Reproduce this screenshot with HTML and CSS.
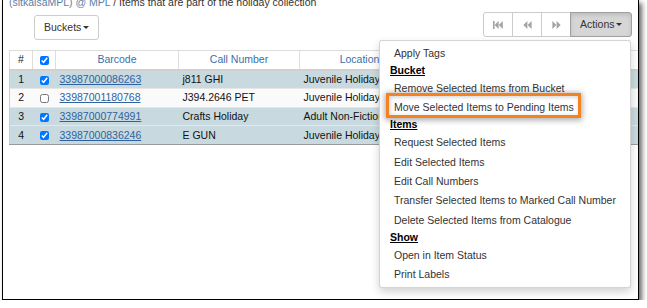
FILE: index.html
```html
<!DOCTYPE html>
<html>
<head>
<meta charset="utf-8">
<link rel="stylesheet" href="styles.css">
</head>
<body>
<div class="frame">
  <div class="title"><span class="title-user">(sitkaisaMPL) @ MPL</span> / Items that are part of the holiday collection</div>
  <div class="toolbar">
    <button class="btn">Buckets<span class="caret"></span></button>
    <div class="btn-group">
      <button class="btn btn-icon" disabled>
        <svg width="10" height="8" viewBox="0 0 10 8"><rect x="0" y="0" width="1.6" height="8"/><polygon points="5.6,0 1.6,4 5.6,8"/><polygon points="9.8,0 5.8,4 9.8,8"/></svg>
      </button>
      <button class="btn btn-icon" disabled>
        <svg width="9" height="8" viewBox="0 0 9 8"><polygon points="4.4,0 0.4,4 4.4,8"/><polygon points="8.6,0 4.6,4 8.6,8"/></svg>
      </button>
      <button class="btn btn-icon" disabled>
        <svg width="9" height="8" viewBox="0 0 9 8"><polygon points="0.4,0 4.4,4 0.4,8"/><polygon points="4.6,0 8.6,4 4.6,8"/></svg>
      </button>
      <button class="btn btn-active">Actions <span class="caret"></span></button>
      <div class="menu">
        <div class="menu-item">Apply Tags</div>
        <div class="menu-header">Bucket</div>
        <div class="menu-item">Remove Selected Items from Bucket</div>
        <div class="menu-item menu-marked">Move Selected Items to Pending Items<span class="highlight"></span></div>
        <div class="menu-header">Items</div>
        <div class="menu-item">Request Selected Items</div>
        <div class="menu-item">Edit Selected Items</div>
        <div class="menu-item">Edit Call Numbers</div>
        <div class="menu-item">Transfer Selected Items to Marked Call Number</div>
        <div class="menu-item">Delete Selected Items from Catalogue</div>
        <div class="menu-header">Show</div>
        <div class="menu-item">Open in Item Status</div>
        <div class="menu-item">Print Labels</div>
      </div>
    </div>
  </div>
  <table class="grid">
    <colgroup>
      <col class="c-num"><col class="c-chk"><col class="c-bar"><col class="c-call"><col class="c-loc"><col class="c-lib"><col class="c-last">
    </colgroup>
    <thead>
      <tr>
        <th class="plain">#</th>
        <th><input type="checkbox" checked></th>
        <th>Barcode</th>
        <th>Call Number</th>
        <th>Location</th>
        <th>Circulation Library</th>
        <th>Owning Library</th>
      </tr>
    </thead>
    <tbody>
      <tr class="sel">
        <td class="center">1</td>
        <td class="center"><input type="checkbox" checked></td>
        <td><a href="#">33987000086263</a></td>
        <td>j811 GHI</td>
        <td>Juvenile Holiday</td>
        <td>MPL</td>
        <td class="last"><a href="#">tw</a></td>
      </tr>
      <tr>
        <td class="center">2</td>
        <td class="center"><input type="checkbox"></td>
        <td><a href="#">33987001180768</a></td>
        <td>J394.2646 PET</td>
        <td>Juvenile Holiday</td>
        <td>MPL</td>
        <td class="last"></td>
      </tr>
      <tr class="sel">
        <td class="center">3</td>
        <td class="center"><input type="checkbox" checked></td>
        <td><a href="#">33987000774991</a></td>
        <td>Crafts Holiday</td>
        <td>Adult Non-Fiction</td>
        <td>MPL</td>
        <td class="last"><a href="#">3</a></td>
      </tr>
      <tr class="sel">
        <td class="center">4</td>
        <td class="center"><input type="checkbox" checked></td>
        <td><a href="#">33987000836246</a></td>
        <td>E GUN</td>
        <td>Juvenile Holiday</td>
        <td>MPL</td>
        <td class="last"></td>
      </tr>
    </tbody>
  </table>
</div>
</body>
</html>
```
FILE: styles.css
```css
* { box-sizing: border-box; }
html, body { margin: 0; padding: 0; background: #fff; }
body {
  font-family: "Liberation Sans", Arial, sans-serif;
  font-size: 10.5px;
  line-height: 15px;
  color: #333;
}
.frame {
  position: relative;
  margin-left: 2px;
  width: 637px;
  height: 300px;
  border: 1px solid #000;
  border-top: none;
  box-shadow: 3px 3px 5px rgba(0,0,0,0.6);
  overflow: hidden;
  background: #fff;
}
.title {
  height: 15px;
  margin-top: -5px;
  padding-left: 6px;
  white-space: nowrap;
  color: #333;
}
.title-user { color: #5a7fa6; }
.toolbar {
  display: flex;
  justify-content: space-between;
  align-items: flex-start;
  padding: 0 6px 0 31px;
}
.btn {
  font-family: inherit;
  font-size: 10.5px;
  line-height: 15px;
  height: 25px;
  padding: 4px 9px;
  border: 1px solid #ccc;
  border-radius: 3px;
  background: #fff;
  color: #333;
  margin: 0;
  display: inline-flex;
  align-items: center;
}
.toolbar > .btn { margin-top: 5px; }
.caret {
  display: inline-block;
  width: 0;
  height: 0;
  margin-left: 1.5px;
  border-top: 3px solid #333;
  border-left: 3px solid transparent;
  border-right: 3px solid transparent;
  vertical-align: middle;
}
.btn-group {
  position: relative;
  display: flex;
  margin-top: 2px;
}
.btn-group .btn { border-radius: 0; margin-left: -1px; }
.btn-group .btn:first-child { border-radius: 3px 0 0 3px; margin-left: 0; }
.btn-group .btn-active { border-radius: 0 3px 3px 0; }
.btn-icon {
  width: 30px;
  justify-content: center;
  padding: 0;
}
.btn-icon svg { fill: #a3a3a3; display: block; }
.btn-active {
  background: #d6d6d6;
  border-color: #a0a0a0;
  box-shadow: inset 0 2px 4px rgba(0,0,0,0.12);
  position: relative;
  z-index: 1;
}
.menu {
  position: absolute;
  top: 28px;
  right: 1px;
  width: 252px;
  padding: 2.5px 0;
  background: #fff;
  border: 1px solid rgba(0,0,0,0.17);
  border-radius: 3px;
  box-shadow: 0 4px 9px rgba(0,0,0,0.18);
  z-index: 10;
}
.menu-item {
  position: relative;
  padding: 2.5px 14px;
  line-height: 14.4px;
  white-space: nowrap;
  color: #333;
}
.menu-header {
  padding: 0 10px;
  line-height: 15.5px;
  font-weight: bold;
  text-decoration: underline;
  color: #000;
}
.highlight {
  position: absolute;
  left: 6px;
  top: -5px;
  width: 195px;
  height: 25px;
  border: 3px solid #f58220;
  box-shadow: 0 1px 6px 1px rgba(0,0,0,0.35), inset 1px 1px 4px rgba(0,0,0,0.2);
}
.grid {
  margin: 10px 0 0 6px;
  border-collapse: collapse;
  table-layout: fixed;
  width: 720px;
}
.c-num { width: 23px; }
.c-chk { width: 23px; }
.c-bar { width: 123px; }
.c-call { width: 121px; }
.c-loc { width: 120px; }
.c-lib { width: 211px; }
.c-last { width: 99px; }
.grid th, .grid td {
  padding: 1.3px 4px;
  line-height: 15px;
  white-space: nowrap;
  overflow: hidden;
  text-align: left;
}
.grid th {
  font-weight: normal;
  color: #3a6fa8;
  text-align: center;
  border: 1px solid #ddd;
  border-bottom: 2px solid #d0d0d0;
  background: #fff;
}
.grid th.plain { color: #222; }
.grid td {
  border-top: 1px solid #e6e6e6;
  color: #111;
  background: #fafafa;
}
.grid td:first-child { border-left: 1px solid #ccc; }
.grid tr.sel td { background: #c8dadf; }
.grid tbody tr:last-child td { border-bottom: 1px solid #9a9a9a; }
.grid td.center { text-align: center; }
.grid td.last { padding-left: 10px; }
.grid a { color: #2f62a0; text-decoration: underline; }
.grid input[type=checkbox] {
  width: 9px;
  height: 9px;
  margin: 0;
  vertical-align: middle;
}
```
